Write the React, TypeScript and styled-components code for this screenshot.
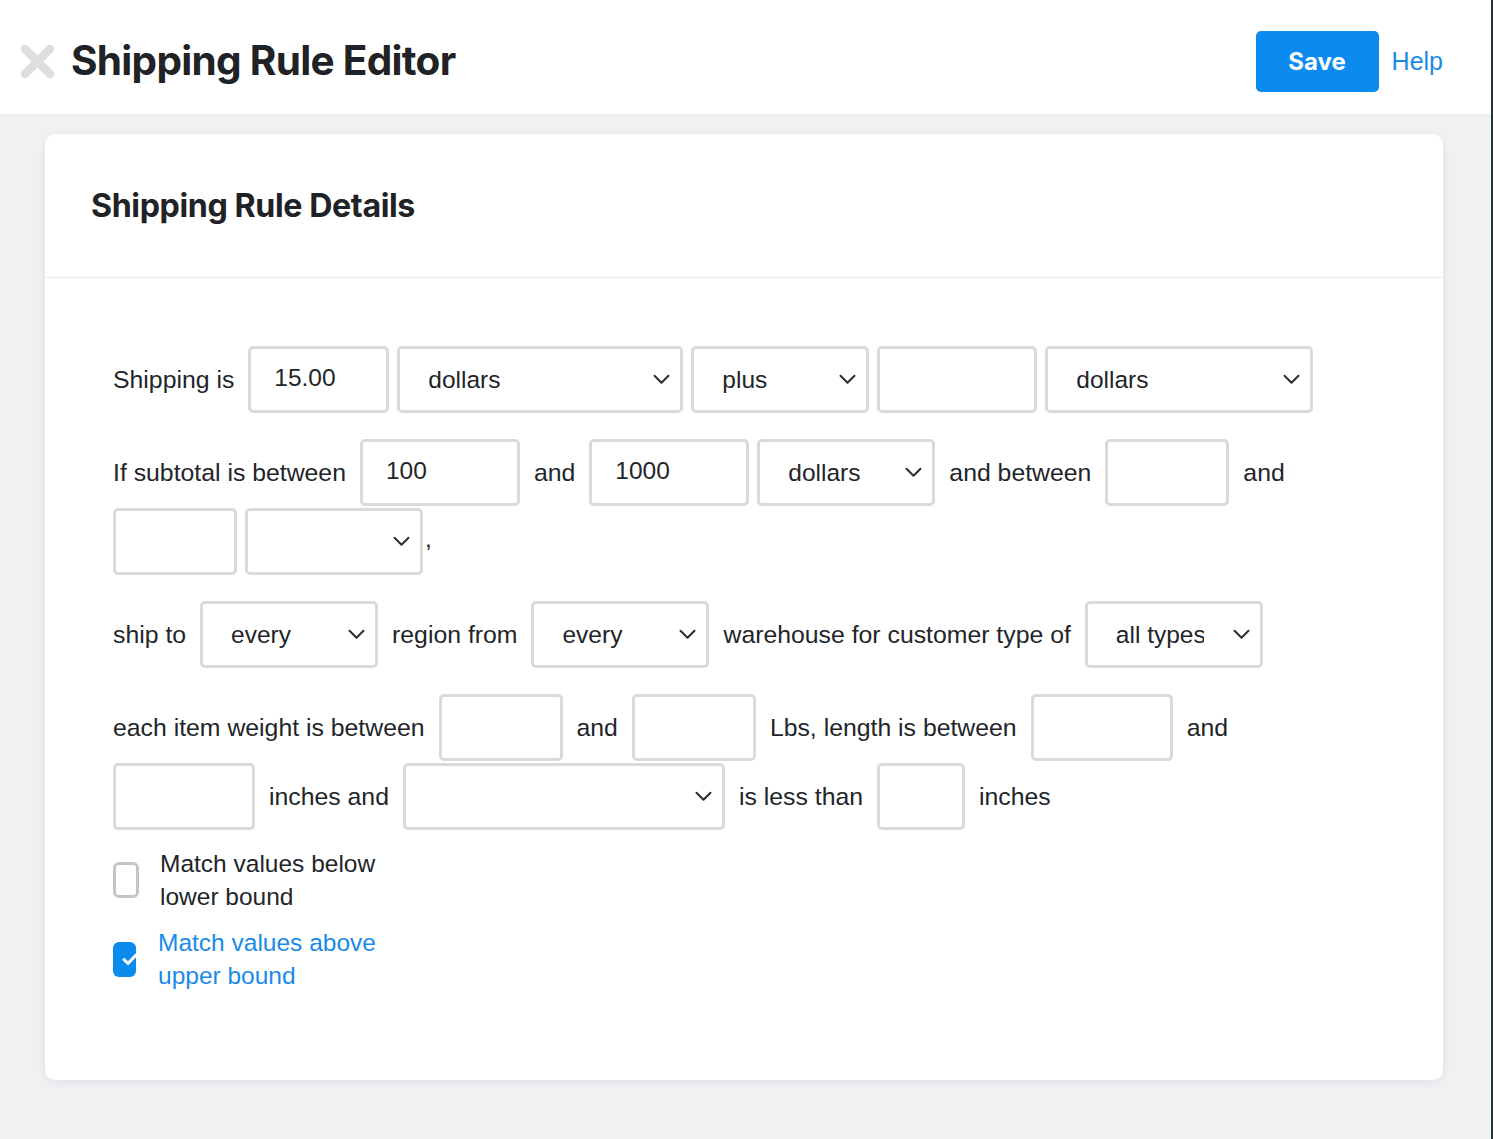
import React from "react";
import styled, { createGlobalStyle } from "styled-components";

const GlobalStyle = createGlobalStyle`
  *, *::before, *::after { box-sizing: border-box; }
  html, body { margin: 0; padding: 0; }
  body {
    background: #f0f1f3;
    font-family: "Liberation Sans", Arial, sans-serif;
    color: #222529;
  }
`;

const Page = styled.div`
  min-height: 100vh;
  border-right: 2px solid #28323c;
  background: #f0f1f3;
`;

const TopBar = styled.header`
  height: 114px;
  background: #ffffff;
  display: flex;
  align-items: center;
  padding: 9px 48px 0 20px;
`;

const CloseButton = styled.button`
  border: 0;
  background: transparent;
  padding: 0;
  width: 35px;
  height: 35px;
  display: flex;
  cursor: pointer;
`;

const Title = styled.h1`
  margin: 0 0 0 16px;
  font-family: Inter, "Liberation Sans", sans-serif;
  font-weight: 700;
  font-size: 40.5px;
  letter-spacing: -0.7px;
  color: #202226;
  line-height: 1;
`;

const Actions = styled.div`
  margin-left: auto;
  display: flex;
  align-items: center;
  gap: 13px;
`;

const SaveButton = styled.button`
  width: 123px;
  height: 61px;
  border: 0;
  border-radius: 5px;
  background: #0b8bee;
  color: #ffffff;
  font-family: Inter, "Liberation Sans", sans-serif;
  font-weight: 700;
  font-size: 24px;
  cursor: pointer;
`;

const HelpLink = styled.a`
  color: #1a8ae8;
  font-size: 25px;
  text-decoration: none;
  cursor: pointer;
`;

const Main = styled.main`
  padding: 20px 48px 58px 45px;
`;

const Card = styled.section`
  background: #ffffff;
  border-radius: 10px;
  box-shadow: 0 2px 10px rgba(30, 40, 60, 0.08);
`;

const CardHeader = styled.div`
  height: 144px;
  display: flex;
  align-items: center;
  padding-left: 46px;
  border-bottom: 1px solid #e8e9eb;
`;

const CardTitle = styled.h2`
  margin: 0;
  font-family: Inter, "Liberation Sans", sans-serif;
  font-weight: 700;
  font-size: 32.2px;
  letter-spacing: -0.4px;
  color: #202226;
`;

const CardBody = styled.div`
  padding: 68px 68px 88px 68px;
`;

const RuleList = styled.div`
  display: flex;
  flex-direction: column;
  gap: 26px;
`;

const Text = styled.span<{ $tight?: boolean }>`
  margin-left: ${(p) => (p.$tight ? "2px" : "14px")};
  font-size: 24.8px;
  white-space: nowrap;
  color: #222529;
  align-self: ${(p) => (p.$tight ? "flex-end" : "center")};
  padding-bottom: ${(p) => (p.$tight ? "22px" : "0")};
`;

const Input = styled.input<{ $w: number }>`
  margin-left: 14px;
  width: ${(p) => p.$w}px;
  height: 67px;
  border: 3px solid #dadada;
  border-radius: 5px;
  padding: 0 0 3px 23px;
  font-family: "Liberation Sans", Arial, sans-serif;
  font-size: 24.5px;
  color: #222529;
  background: #ffffff;
  outline: none;
`;

const SelectBox = styled.div<{ $w: number }>`
  margin-left: 14px;
  width: ${(p) => p.$w}px;
  height: 67px;
  border: 3px solid #dadada;
  border-radius: 5px;
  background: #ffffff;
  display: flex;
  align-items: center;
  padding: 0 10px 0 28px;
  cursor: pointer;
`;

const SelectValue = styled.span`
  flex: 1;
  min-width: 0;
  overflow: hidden;
  white-space: nowrap;
  font-size: 24.5px;
  color: #222529;
  padding-top: 1px;
  margin-right: 29px;
`;

const Rule = styled.div`
  display: flex;
  flex-wrap: wrap;
  align-items: center;
  row-gap: 2px;
  margin-left: -14px;

  ${Input} + ${Input},
  ${Input} + ${SelectBox},
  ${SelectBox} + ${Input},
  ${SelectBox} + ${SelectBox} {
    margin-left: 8px;
  }
`;

const OptionList = styled.div`
  margin-top: 17px;
  display: flex;
  flex-direction: column;
  gap: 13px;
`;

const OptionRow = styled.label`
  display: flex;
  align-items: center;
  cursor: pointer;
`;

const Box = styled.span<{ $checked?: boolean }>`
  flex: none;
  width: ${(p) => (p.$checked ? "23px" : "26px")};
  height: ${(p) => (p.$checked ? "35px" : "36px")};
  border-radius: 6px;
  border: ${(p) => (p.$checked ? "none" : "3px solid #c4c4c4")};
  background: ${(p) => (p.$checked ? "#0b8bee" : "#ffffff")};
  display: flex;
  align-items: center;
  padding-left: 9px;
  overflow: hidden;
`;

const OptionText = styled.span<{ $checked?: boolean }>`
  margin-left: ${(p) => (p.$checked ? "22px" : "21px")};
  max-width: 235px;
  font-size: 24.5px;
  line-height: 33px;
  color: ${(p) => (p.$checked ? "#1a8ae8" : "#222529")};
`;

const Chevron = () => (
  <svg width="17" height="11" viewBox="0 0 17 11" fill="none">
    <path d="M1.5 1.8 L8.5 8.8 L15.5 1.8" stroke="#2b2d30" strokeWidth="2" strokeLinecap="round" strokeLinejoin="round" />
  </svg>
);

const CloseGlyph = () => (
  <svg width="35" height="35" viewBox="0 0 35 35" fill="none">
    <path d="M5 5 L30 30 M30 5 L5 30" stroke="#dedede" strokeWidth="8.5" strokeLinecap="round" />
  </svg>
);

const CheckGlyph = () => (
  <svg width="16" height="13" viewBox="0 0 16 13" fill="none" style={{ flex: "none" }}>
    <path d="M2 6.5 L6 10.5 L14 2" stroke="#ffffff" strokeWidth="3" strokeLinecap="round" strokeLinejoin="round" />
  </svg>
);

const Select = ({ w, value = "" }: { w: number; value?: string }) => (
  <SelectBox $w={w} role="combobox">
    <SelectValue>{value}</SelectValue>
    <Chevron />
  </SelectBox>
);

const Field = ({ w, value = "" }: { w: number; value?: string }) => (
  <Input $w={w} defaultValue={value} />
);

export default function App() {
  return (
    <Page>
      <GlobalStyle />
      <TopBar>
        <CloseButton aria-label="Close">
          <CloseGlyph />
        </CloseButton>
        <Title>Shipping Rule Editor</Title>
        <Actions>
          <SaveButton>Save</SaveButton>
          <HelpLink>Help</HelpLink>
        </Actions>
      </TopBar>
      <Main>
        <Card>
          <CardHeader>
            <CardTitle>Shipping Rule Details</CardTitle>
          </CardHeader>
          <CardBody>
            <RuleList>
              <Rule>
                <Text>Shipping is</Text>
                <Field w={141} value="15.00" />
                <Select w={286} value="dollars" />
                <Select w={178} value="plus" />
                <Field w={160} />
                <Select w={268} value="dollars" />
              </Rule>
              <Rule>
                <Text>If subtotal is between</Text>
                <Field w={160} value="100" />
                <Text>and</Text>
                <Field w={160} value="1000" />
                <Select w={178} value="dollars" />
                <Text>and between</Text>
                <Field w={124} />
                <Text>and</Text>
                <Field w={124} />
                <Select w={178} />
                <Text $tight>,</Text>
              </Rule>
              <Rule>
                <Text>ship to</Text>
                <Select w={178} value="every" />
                <Text>region from</Text>
                <Select w={178} value="every" />
                <Text>warehouse for customer type of</Text>
                <Select w={178} value="all types" />
              </Rule>
              <Rule>
                <Text>each item weight is between</Text>
                <Field w={124} />
                <Text>and</Text>
                <Field w={124} />
                <Text>Lbs, length is between</Text>
                <Field w={142} />
                <Text>and</Text>
                <Field w={142} />
                <Text>inches and</Text>
                <Select w={322} />
                <Text>is less than</Text>
                <Field w={88} />
                <Text>inches</Text>
              </Rule>
            </RuleList>
            <OptionList>
              <OptionRow>
                <Box />
                <OptionText>Match values below lower bound</OptionText>
              </OptionRow>
              <OptionRow>
                <Box $checked>
                  <CheckGlyph />
                </Box>
                <OptionText $checked>Match values above upper bound</OptionText>
              </OptionRow>
            </OptionList>
          </CardBody>
        </Card>
      </Main>
    </Page>
  );
}
